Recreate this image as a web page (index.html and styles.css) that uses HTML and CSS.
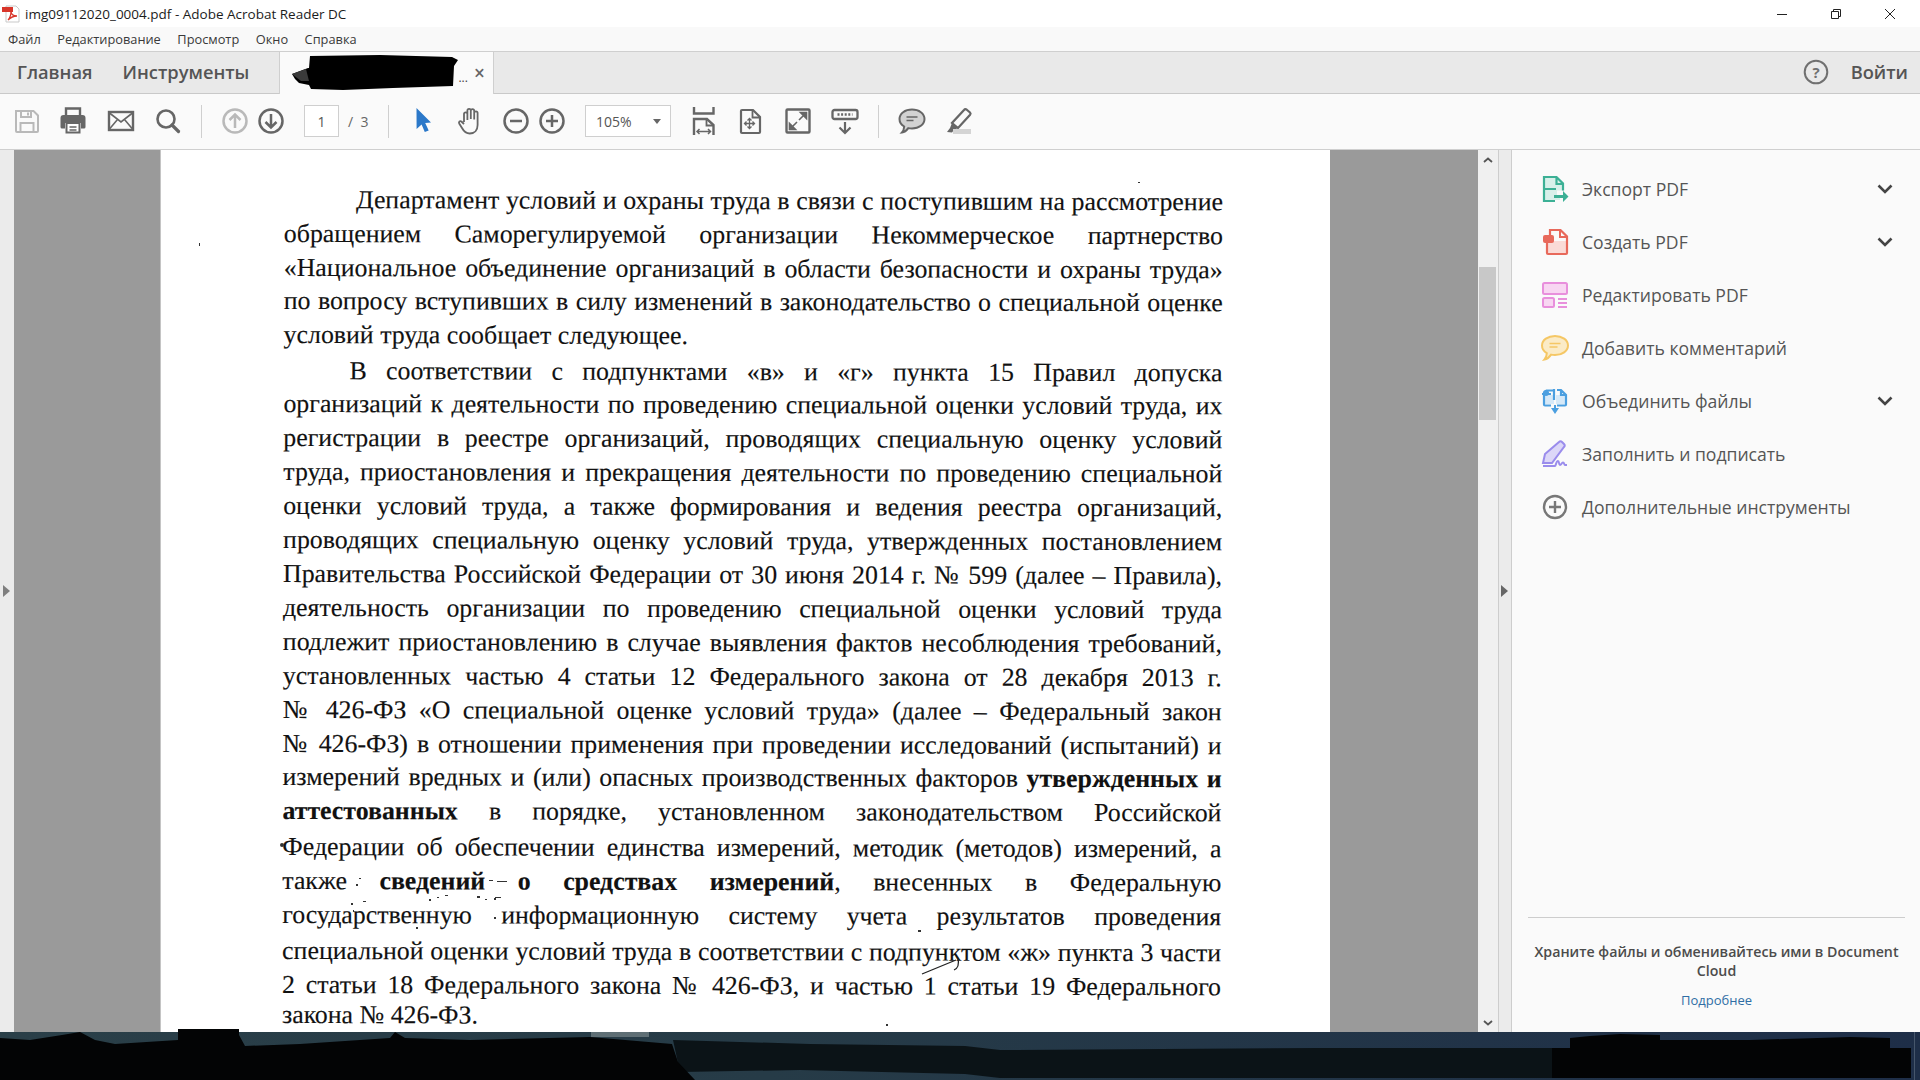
FILE: index.html
```html
<!DOCTYPE html>
<html lang="ru">
<head>
<meta charset="utf-8">
<title>img09112020_0004.pdf - Adobe Acrobat Reader DC</title>
<link rel="stylesheet" href="styles.css">
</head>
<body>
<div class="app">
  <header class="titlebar">
    <svg class="app-icon" viewBox="0 0 18 18"><path d="M4 1h10l3 3v13H4z" fill="#fff" stroke="#c9c9c9"/><rect x="0" y="2" width="11" height="5" fill="#d8352a"/><path d="M6 15c2-2 3-6 3-9 0 3 2 5 6 5-3 0-6 1-9 4z" fill="none" stroke="#d8352a" stroke-width="1.3"/></svg>
    <span class="title-text">img09112020_0004.pdf - Adobe Acrobat Reader DC</span>
    <div class="win-controls">
      <svg class="win-btn" viewBox="0 0 12 12"><path d="M1 6.5h10" stroke="#222" stroke-width="1" fill="none"/></svg>
      <svg class="win-btn" viewBox="0 0 12 12"><path d="M1.5 3.5h7v7h-7zM3.5 3.5v-2h7v7h-2" stroke="#222" stroke-width="1" fill="none"/></svg>
      <svg class="win-btn" viewBox="0 0 12 12"><path d="M1 1l10 10M11 1L1 11" stroke="#222" stroke-width="1" fill="none"/></svg>
    </div>
  </header>

  <nav class="menubar">
    <span>Файл</span><span>Редактирование</span><span>Просмотр</span><span>Окно</span><span>Справка</span>
  </nav>

  <div class="tabbar">
    <span class="tab">Главная</span>
    <span class="tab">Инструменты</span>
    <div class="tab-doc">
      <svg class="redact" viewBox="0 0 166 36"><path d="M0 19l16-6 1 0L18 1l70-1 72 2 6 3-4 6-1 20-60 2-50 2-32-1-2-4-10-2-4-4z" fill="#000"/><path d="M0 19l14-5 3 12-8 0z" fill="#3a3a3a"/></svg>
      <span class="ellipsis">...</span>
      <span class="tab-close">×</span>
    </div>
    <div class="tab-right">
      <svg class="help" viewBox="0 0 26 26"><circle cx="13" cy="13" r="11.3" fill="none" stroke="#707070" stroke-width="2"/><text x="13" y="18.5" text-anchor="middle" class="help-q">?</text></svg>
      <span class="tab">Войти</span>
    </div>
  </div>

  <div class="toolbar">
    <svg class="ti" viewBox="0 0 28 28"><path d="M3 4h17.500l4.500 4.500V24a1 1 0 0 1-1 1H4a1 1 0 0 1-1-1z" fill="none" stroke="#b9b9b9" stroke-width="2"/><path d="M8 4v6h10V4M15 5.500v3M7.500 25v-9h13v9" fill="none" stroke="#b9b9b9" stroke-width="2"/></svg>
    <svg class="ti" viewBox="0 0 28 28"><path d="M6 9V1.500h14V9" fill="none" stroke="#666" stroke-width="2.400"/><path d="M3.500 8h19A3 3 0 0 1 25.500 11v9a1.500 1.500 0 0 1-1.500 1.500h-3V16H5v5.500H2A1.500 1.500 0 0 1 .5 20v-9A3 3 0 0 1 3.500 8z" fill="#666"/><path d="M6.500 16h13v9.500h-13z" fill="#fff" stroke="#666" stroke-width="2"/><path d="M9.500 20h7M9.500 23h7" stroke="#666" stroke-width="1.500"/></svg>
    <svg class="ti" viewBox="0 0 28 28"><rect x="2" y="5" width="24" height="18" fill="none" stroke="#666" stroke-width="2.400"/><path d="M2.500 6L14 15l11.500-9M2.500 22l8-9.500M25.500 22l-8-9.500" fill="none" stroke="#666" stroke-width="1.600"/></svg>
    <svg class="ti" viewBox="0 0 28 28"><circle cx="12" cy="12" r="8.500" fill="none" stroke="#666" stroke-width="2.600"/><path d="M18 18l6.500 6.500" stroke="#666" stroke-width="3.200" stroke-linecap="round"/></svg>
    <i class="sep"></i>
    <div class="tight">
      <svg class="ti" viewBox="0 0 28 28"><circle cx="14" cy="14" r="11.500" fill="none" stroke="#b9b9b9" stroke-width="2.500"/><path d="M14 21V8M8.500 13L14 7.500l5.500 5.500" fill="none" stroke="#b9b9b9" stroke-width="2.500"/></svg>
      <svg class="ti" viewBox="0 0 28 28"><circle cx="14" cy="14" r="11.500" fill="none" stroke="#666" stroke-width="2.500"/><path d="M14 7v13M8.500 15l5.500 5.500 5.500-5.500" fill="none" stroke="#666" stroke-width="2.500"/></svg>
    </div>
    <div class="pager">
      <span class="page-box">1</span>
      <span class="page-count">/&nbsp;&nbsp;3</span>
    </div>
    <i class="sep"></i>
    <svg class="ti" viewBox="-1 0 28 28"><path d="M7.500 1L22 15.500l-5.800.6 3.500 7.300-3.900 1.600-3.200-7.400-5 4.400z" fill="#2b78c9"/></svg>
    <svg class="ti" viewBox="-1 0 28 28"><path d="M8 15V7a1.700 1.700 0 0 1 3.400 0v6M11.400 12V3.500a1.700 1.700 0 0 1 3.400 0V12M14.800 12V3.800a1.700 1.700 0 0 1 3.400 0V12.500M18.200 12.500V6a1.700 1.700 0 0 1 3.400 0v12c0 5-3 8.500-7.800 8.500-4.300 0-6-2.200-7.800-5.500L3.200 16.500c-.8-1.600.8-3 2.200-2L8 17" fill="none" stroke="#666" stroke-width="1.800" stroke-linejoin="round"/></svg>
    <div class="tight">
      <svg class="ti" viewBox="0 0 28 28"><circle cx="14" cy="14" r="11.500" fill="none" stroke="#666" stroke-width="2.500"/><path d="M8 14h12" stroke="#666" stroke-width="2.500"/></svg>
      <svg class="ti" viewBox="0 0 28 28"><circle cx="14" cy="14" r="11.500" fill="none" stroke="#666" stroke-width="2.500"/><path d="M8 14h12M14 8v12" stroke="#666" stroke-width="2.500"/></svg>
    </div>
    <div class="zoom-box"><span>105%</span><i class="caret"></i></div>
    <svg class="ti" viewBox="0 0 28 28"><path d="M4 0v6.500h19.500V0" fill="none" stroke="#666" stroke-width="2.400"/><path d="M4 28V12h13l6.500 6v10" fill="none" stroke="#666" stroke-width="2.400"/><path d="M16.500 12v6.500h7" fill="none" stroke="#666" stroke-width="1.800"/><path d="M7 24.500h13.500M9.500 22l-2.500 2.500 2.500 2.500M18 22l2.500 2.500L18 27" fill="none" stroke="#666" stroke-width="1.500"/></svg>
    <svg class="ti" viewBox="0 0 28 28"><path d="M5 3h11l7 7v15a1 1 0 0 1-1 1H5a1 1 0 0 1-1-1V4a1 1 0 0 1 1-1z" fill="none" stroke="#666" stroke-width="2.200"/><path d="M15.500 3v7.500H23" fill="none" stroke="#666" stroke-width="1.800"/><path d="M8 16.500h9M12.500 12v9M9.500 14.500l-2 2 2 2M15.500 14.500l2 2-2 2M10.500 13.500l2-2 2 2M10.500 19.500l2 2 2-2" fill="none" stroke="#666" stroke-width="1.300"/></svg>
    <svg class="ti" viewBox="0 0 28 28"><rect x="2.500" y="2.500" width="23" height="23" rx="1" fill="none" stroke="#666" stroke-width="2.400"/><path d="M15 13l7-7M22.500 5.500v6l-6-6zM13 15l-7 7M5.500 22.500v-6l6 6z" fill="#666" stroke="#666" stroke-width="1.600"/></svg>
    <svg class="ti" viewBox="0 0 28 28"><rect x="1.500" y="3" width="25" height="9" rx="2" fill="none" stroke="#666" stroke-width="2.300"/><path d="M6.500 7.500h15" stroke="#666" stroke-width="2.400" stroke-dasharray="2 1.600"/><path d="M14 15v11M8.500 20.500L14 26l5.500-5.500" fill="none" stroke="#666" stroke-width="2.200"/></svg>
    <i class="sep"></i>
    <svg class="ti" viewBox="0 0 28 28"><path d="M14 2.500c7 0 12.500 4 12.500 9.500S21 21.500 14 21.500c-1.400 0-2.500-.1-3.700-.4-1.300 1.800-3.500 4.100-6.300 4.400 1.200-1.300 2-3.400 2.200-6C3.300 17.800 1.500 15 1.500 12 1.500 6.500 7 2.500 14 2.500z" fill="#d2d2d2" stroke="#666" stroke-width="2"/><path d="M8.500 10h11M8.500 13.500h7" stroke="#666" stroke-width="1.300"/></svg>
    <svg class="ti" viewBox="0 0 28 28"><path d="M21.500 2.500l3.500 3c.7.700.7 1.500.1 2.200L13 21l-6-5L19 3c.7-.9 1.800-1 2.500-.5z" fill="none" stroke="#666" stroke-width="2.200"/><path d="M7 16l-2 5-3 4 5 .5 2-2.500 4-2z" fill="#666"/><rect x="8" y="22" width="18" height="5" fill="#d4d4d4"/></svg>
  </div>

  <main class="workspace">
    <div class="strip strip-left"><i class="arrow"></i></div>

    <section class="doc-area">
      <article class="page">
        <div class="text">
          <p class="ln first">Департамент условий и охраны труда в связи с поступившим на рассмотрение</p>
          <p class="ln">обращением Саморегулируемой организации Некоммерческое партнерство</p>
          <p class="ln">«Национальное объединение организаций в области безопасности и охраны труда»</p>
          <p class="ln back">по вопросу вступивших в силу изменений в законодательство о специальной оценке</p>
          <p class="ln end">условий труда сообщает следующее.</p>
          <p class="ln second">В соответствии с подпунктами «в» и «г» пункта 15 Правил допуска</p>
          <p class="ln">организаций к деятельности по проведению специальной оценки условий труда, их</p>
          <p class="ln">регистрации в реестре организаций, проводящих специальную оценку условий</p>
          <p class="ln">труда, приостановления и прекращения деятельности по проведению специальной</p>
          <p class="ln">оценки условий труда, а также формирования и ведения реестра организаций,</p>
          <p class="ln">проводящих специальную оценку условий труда, утвержденных постановлением</p>
          <p class="ln">Правительства Российской Федерации от 30 июня 2014 г. № 599 (далее – Правила),</p>
          <p class="ln">деятельность организации по проведению специальной оценки условий труда</p>
          <p class="ln">подлежит приостановлению в случае выявления фактов несоблюдения требований,</p>
          <p class="ln">установленных частью 4 статьи 12 Федерального закона от 28 декабря 2013 г.</p>
          <p class="ln">№ 426-ФЗ «О специальной оценке условий труда» (далее – Федеральный закон</p>
          <p class="ln">№ 426-ФЗ) в отношении применения при проведении исследований (испытаний) и</p>
          <p class="ln">измерений вредных и (или) опасных производственных факторов <b>утвержденных и</b></p>
          <p class="ln"><b>аттестованных</b> в порядке, установленном законодательством Российской</p>
          <p class="ln nudge">Федерации об обеспечении единства измерений, методик (методов) измерений, а</p>
          <p class="ln">также <b>сведений о средствах измерений</b>, внесенных в Федеральную</p>
          <p class="ln">государственную информационную систему учета результатов проведения</p>
          <p class="ln nudge">специальной оценки условий труда в соответствии с подпунктом «ж» пункта 3 части</p>
          <p class="ln">2 статьи 18 Федерального закона № 426-ФЗ, и частью 1 статьи 19 Федерального</p>
          <p class="ln end last">закона № 426-ФЗ.</p>
        </div>
        <svg class="specks" viewBox="160 150 1170 882">
          <g fill="#333">
            <rect x="198" y="243" width="1" height="3"/><rect x="1137" y="182" width="2" height="1"/><rect x="885" y="1024" width="2" height="2"/>
            <circle cx="281" cy="845" r="2"/><rect x="355" y="884" width="2" height="2"/><rect x="358" y="878" width="2" height="1"/>
            <rect x="350" y="903" width="2" height="2"/><rect x="352" y="910" width="1" height="2"/><rect x="362" y="901" width="3" height="1"/>
            <rect x="428" y="899" width="2" height="2"/><rect x="436" y="897" width="2" height="1"/><rect x="444" y="895" width="3" height="1"/>
            <rect x="476" y="896" width="3" height="2"/><rect x="484" y="899" width="2" height="1"/><rect x="494" y="897" width="6" height="1"/>
            <rect x="488" y="880" width="4" height="1"/><rect x="496" y="881" width="10" height="1"/><rect x="493" y="898" width="2" height="2"/>
            <rect x="917" y="930" width="3" height="2"/><rect x="493" y="917" width="2" height="2"/><rect x="415" y="927" width="2" height="2"/>
          </g>
          <path d="M921 974L955 960M957 958c1 5 1 10-4 12" fill="none" stroke="#222" stroke-width="1.300"/>
        </svg>
      </article>
    </section>

    <div class="scrollbar">
      <svg class="sb-arrow" viewBox="0 0 10 6"><path d="M1 5l4-3.500L9 5" fill="none" stroke="#555" stroke-width="1.800"/></svg>
      <div class="sb-track"><i class="sb-thumb"></i></div>
      <svg class="sb-arrow" viewBox="0 0 10 6"><path d="M1 1l4 3.500L9 1" fill="none" stroke="#555" stroke-width="1.800"/></svg>
    </div>
    <div class="strip strip-right"><i class="arrow arrow-dark"></i></div>

    <aside class="panel">
      <ul class="tools">
        <li>
          <svg class="tool-icon" viewBox="0 0 28 28"><path d="M3 1.500h13l7 7v7h-7v5h3V25H3z" fill="#d8f0ea"/><path d="M15 14H3V2h12.500l6.500 6.500v7M15.500 2.500v6.500h6.500M14 26H3V14" fill="none" stroke="#3cb095" stroke-width="2.200"/><path d="M13 20h9v-4l5.500 5.500L22 27v-4h-9z" fill="#3cb095"/></svg>
          <span>Экспорт PDF</span>
          <svg class="chev" viewBox="0 0 16 10"><path d="M1.500 1.500L8 8l6.500-6.500" fill="none" stroke="#444" stroke-width="2.600"/></svg>
        </li>
        <li>
          <svg class="tool-icon" viewBox="0 0 28 28"><path d="M7 13h18v12H7z" fill="#fadbd7"/><path d="M9 8V2h10.500L26 8.500V25a1 1 0 0 1-1 1H7a1 1 0 0 1-1-1V15" fill="none" stroke="#e8695b" stroke-width="2.200"/><path d="M19 2.500V9h7" fill="none" stroke="#e8695b" stroke-width="2"/><rect x="2" y="7" width="11" height="8" rx="2" fill="#e8695b"/></svg>
          <span>Создать PDF</span>
          <svg class="chev" viewBox="0 0 16 10"><path d="M1.500 1.500L8 8l6.500-6.500" fill="none" stroke="#444" stroke-width="2.600"/></svg>
        </li>
        <li>
          <svg class="tool-icon" viewBox="0 0 28 28"><rect x="2" y="2" width="24" height="11" rx="1.500" fill="#f8d6f2" stroke="#e88fdc" stroke-width="2"/><rect x="2" y="17" width="11" height="9" rx="1.500" fill="#f8d6f2" stroke="#e88fdc" stroke-width="2"/><path d="M17 18h9M17 22h9M17 26h9" stroke="#e88fdc" stroke-width="1.800"/></svg>
          <span>Редактировать PDF</span>
        </li>
        <li>
          <svg class="tool-icon" viewBox="0 0 28 28"><path d="M14 2c7 0 13 4 13 9.500S21 21 14 21c-1.500 0-2.700-.1-3.900-.4C8.800 22.500 6.500 25 3.500 25.500c1.300-1.500 2.200-3.700 2.300-6.300C2.900 17.500 1 14.700 1 11.500 1 6 7 2 14 2z" fill="#fbebc6" stroke="#f5c765" stroke-width="2"/><path d="M8.500 9.500h11M8.500 13h8" stroke="#f5c765" stroke-width="1.500"/></svg>
          <span>Добавить комментарий</span>
        </li>
        <li>
          <svg class="tool-icon" viewBox="0 0 28 28"><path d="M4 8h9v9H4zM15 8h9v9h-9z" fill="#d6e9f8"/><path d="M12 3.500H5.500L3 6v4M3 7.500v-.5M1 7h9M3 10v7.500a1 1 0 0 0 1 1h6M16 18.500h8a1 1 0 0 0 1-1V8l-5-5h-4M20 3v5h5M13 2v11" fill="none" stroke="#4b9fe0" stroke-width="2.200"/><path d="M10 21h3v-3h2v3h3l-4 6z" fill="#4b9fe0"/><circle cx="5" cy="6" r="3" fill="#4b9fe0"/></svg>
          <span>Объединить файлы</span>
          <svg class="chev" viewBox="0 0 16 10"><path d="M1.500 1.500L8 8l6.500-6.500" fill="none" stroke="#444" stroke-width="2.600"/></svg>
        </li>
        <li>
          <svg class="tool-icon" viewBox="0 0 28 28"><path d="M18 2c1-1 2-1 3 0l2 2c1 1 1 2 0 3L11 23H2l2-9z" fill="#dcd7f8" stroke="#9a8cec" stroke-width="2"/><path d="M2 26h12c1 0 1-5 3-5 1.500 0 .5 4 2 4s1.500-2.500 3-2.500 1 2.500 2 2.500h2" fill="none" stroke="#9a8cec" stroke-width="2"/></svg>
          <span>Заполнить и подписать</span>
        </li>
        <li>
          <svg class="tool-icon" viewBox="0 0 28 28"><circle cx="14" cy="14" r="11" fill="none" stroke="#777" stroke-width="2.400"/><path d="M8 14h12M14 8v12" stroke="#777" stroke-width="2.400"/></svg>
          <span>Дополнительные инструменты</span>
        </li>
      </ul>
      <footer class="cloud">
        <p class="cloud-text">Храните файлы и обменивайтесь ими в Document Cloud</p>
        <a class="cloud-link">Подробнее</a>
      </footer>
    </aside>
  </main>

  <footer class="taskbar">
    <svg class="task-redact" viewBox="0 0 1920 48" preserveAspectRatio="none">
      <path d="M673 8L810 12 965 14 1000 18 1320 16 1560 16V46H1000L965 42 800 38 680 40z" fill="#0b1317"/>
      <rect x="591" y="0" width="58" height="5" fill="#5f6f75"/>
      <rect x="1914" y="0" width="1" height="48" fill="#46566b"/>
      <path d="M0 6L30 8 62 3 80 0 95 8 115 12 178 8V-3H239V3L245 14 300 12 390 6 395 0 405 6 470 8 590 5 672 12 678 30 695 48H0z" fill="#030405"/>
      <path d="M1552 16L1570 16 1570 6 1590 4 1620 2 1660 3 1660 8 1750 8 1850 5 1890 6 1890 16 1911 16 1911 46H1552z" fill="#030405"/>
    </svg>
  </footer>
</div>
</body>
</html>
```
FILE: styles.css
```css
* { box-sizing: border-box; }
html, body { margin: 0; padding: 0; }
body { font-family: "Open Sans", "Noto Sans", sans-serif; color: #444; overflow: hidden; }
.app { width: 1920px; height: 1080px; display: flex; flex-direction: column; background: #fafafa; }

/* title */
.titlebar { height: 27px; background: #fff; display: flex; align-items: center; padding-left: 2px; }
.app-icon { width: 18px; height: 18px; }
.title-text { margin-left: 5px; font-size: 13.5px; color: #1c1c1c; }
.win-controls { margin-left: auto; display: flex; align-items: center; gap: 42px; padding-right: 24px; }
.win-btn { width: 12px; height: 12px; }

/* menu */
.menubar { height: 25px; background: #f9f9f9; border-bottom: 1px solid #cfcfcf; display: flex; align-items: center; gap: 16.5px; padding-left: 8px; font-size: 12.8px; color: #3a3a3a; }

/* tabs */
.tabbar { height: 42px; background: #e9e9e9; border-bottom: 1px solid #c9c9c9; display: flex; align-items: center; gap: 30px; padding: 0 0 2px 17px; }
.tab { font-size: 18.3px; font-weight: 600; color: #555; }
.tab-doc { position: relative; align-self: flex-start; width: 215px; height: 42px; background: #fafafa; border-left: 1px solid #cfcfcf; border-right: 1px solid #cfcfcf; display: flex; align-items: center; padding-left: 12px; }
.redact { width: 166px; height: 36px; }
.ellipsis { font-size: 12px; color: #444; margin-top: 8px; margin-left: 0; }
.tab-close { margin-left: 6px; font-size: 19px; font-weight: 600; color: #666; line-height: 1; }
.tab-right { margin-left: auto; display: flex; align-items: center; gap: 22px; padding-right: 12px; }
.help { width: 26px; height: 26px; }
.help-q { font-size: 15px; font-weight: 700; fill: #707070; font-family: "Open Sans", sans-serif; }

/* toolbar */
.toolbar { height: 56px; background: #fafafa; border-bottom: 1px solid #cfcfcf; display: flex; align-items: center; gap: 19px; padding: 0 0 1px 13px; }
.ti { width: 28px; height: 28px; flex: none; overflow: visible; }
.sep { width: 1px; height: 33px; background: #cfcfcf; flex: none; }
.tight { display: flex; gap: 8px; }
.pager { display: flex; align-items: center; gap: 9px; width: 65px; font-size: 14px; color: #666; }
.page-box { width: 35px; height: 32px; background: #fff; border: 1px solid #cfcfcf; display: flex; align-items: center; justify-content: center; color: #555; }
.page-count { white-space: nowrap; }
.zoom-box { width: 86px; height: 32px; background: #fff; border: 1px solid #cfcfcf; display: flex; align-items: center; justify-content: space-between; padding: 0 9px 0 10px; font-size: 14px; color: #555; }
.caret { width: 0; height: 0; border-left: 4.5px solid transparent; border-right: 4.5px solid transparent; border-top: 5px solid #666; }

/* workspace */
.workspace { height: 882px; display: flex; }
.strip { position: relative; background: #ebebeb; display: flex; align-items: center; }
.strip-left { width: 14px; padding-left: 3px; }
.strip-right { width: 14px; border-left: 1px solid #cdcdcd; border-right: 1px solid #cdcdcd; padding-left: 2px; }
.arrow { width: 0; height: 0; border-top: 6.5px solid transparent; border-bottom: 6.5px solid transparent; border-left: 7px solid #7f7f7f; }
.arrow-dark { border-left-color: #666; }

.doc-area { width: 1464px; background: #9a9a9a; padding-left: 146px; overflow: hidden; }
.page { position: relative; width: 1170px; height: 882px; background: #fff; padding: 33px 0 0 123px; border-left: 1px solid #c4c4c4; }
.text { width: 939px; font-family: "Liberation Serif", "Times New Roman", serif; font-size: 25.85px; line-height: 33.9px; color: #111; -webkit-text-stroke: 0.15px #111; transform: rotate(0.14deg); transform-origin: 0 0; }
.ln { margin: 0; white-space: nowrap; text-align: justify; text-align-last: justify; }
.ln.end { text-align-last: left; }
.ln.first { padding-left: 72px; }
.ln.second { padding-left: 66px; margin-top: 2px; }
.ln.back { margin-top: -1px; }
.ln.nudge { margin-top: 2px; }
.ln.last { margin-top: -4px; }
.specks { position: absolute; left: 0; top: 0; width: 1170px; height: 882px; pointer-events: none; }

.scrollbar { width: 20px; background: #f0f0f0; display: flex; flex-direction: column; align-items: center; padding: 7px 0 6px; }
.sb-arrow { width: 10px; height: 6px; flex: none; }
.sb-track { flex: 1; width: 100%; position: relative; }
.sb-thumb { position: absolute; left: 1px; right: 2px; top: 104px; height: 153px; background: #c8c8c8; }

/* panel */
.panel { width: 408px; background: #fafafa; display: flex; flex-direction: column; }
.tools { list-style: none; margin: 0; padding: 13px 27px 0 29px; }
.tools li { height: 52.9px; display: flex; align-items: center; gap: 13px; font-size: 17.6px; color: #555; }
.tool-icon { width: 28px; height: 28px; flex: none; overflow: visible; }
.chev { width: 16px; height: 10px; margin-left: auto; }
.cloud { margin: auto 15px 0 16px; height: 115px; border-top: 1px solid #cdcdcd; padding-top: 24px; display: flex; flex-direction: column; align-items: center; text-align: center; }
.cloud-text { margin: 0; font-size: 14.2px; line-height: 19px; font-weight: 600; color: #4c4c4c; }
.cloud-link { margin-top: 11px; font-size: 13px; color: #2f6ea5; }

/* taskbar */
.taskbar { position: relative; height: 48px; background: linear-gradient(90deg, #2a3f48 0%, #263b47 40%, #1e2e48 100%); }
.task-redact { position: absolute; left: 0; top: 0; width: 1920px; height: 48px; overflow: visible; }
```
